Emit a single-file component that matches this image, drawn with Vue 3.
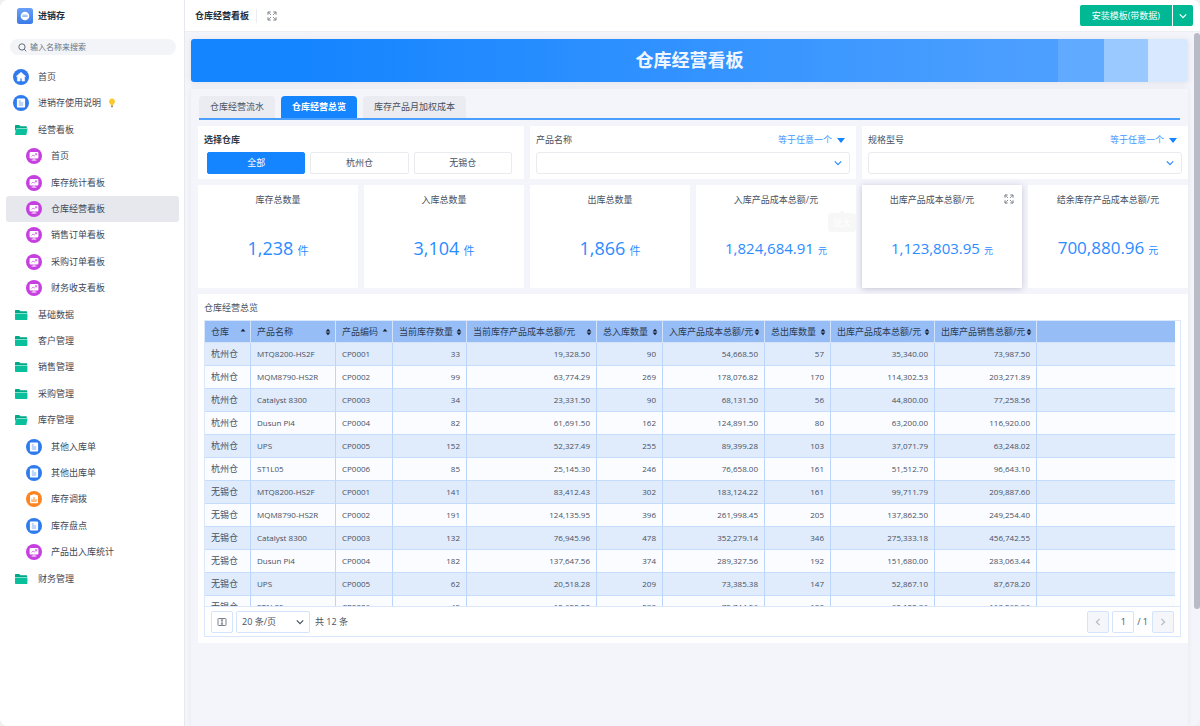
<script setup>
import { ref } from 'vue'

const nav = [
  { label: '首页', icon: 'home' },
  { label: '进销存使用说明', icon: 'doc', tip: true },
  {
    label: '经营看板',
    icon: 'open',
    children: [
      { label: '首页', icon: 'board' },
      { label: '库存统计看板', icon: 'board' },
      { label: '仓库经营看板', icon: 'board', active: true },
      { label: '销售订单看板', icon: 'board' },
      { label: '采购订单看板', icon: 'board' },
      { label: '财务收支看板', icon: 'board' },
    ],
  },
  { label: '基础数据', icon: 'folder' },
  { label: '客户管理', icon: 'folder' },
  { label: '销售管理', icon: 'folder' },
  { label: '采购管理', icon: 'folder' },
  {
    label: '库存管理',
    icon: 'open',
    children: [
      { label: '其他入库单', icon: 'doc' },
      { label: '其他出库单', icon: 'doc' },
      { label: '库存调拨', icon: 'flow' },
      { label: '库存盘点', icon: 'doc' },
      { label: '产品出入库统计', icon: 'board' },
    ],
  },
  { label: '财务管理', icon: 'folder' },
]

const rows = nav.flatMap((item) => [
  { ...item, level: 0 },
  ...(item.children || []).map((child) => ({ ...child, level: 1 })),
])

const tabs = ['仓库经营流水', '仓库经营总览', '库存产品月加权成本']
const tab = ref(1)
const stores = ['全部', '杭州仓', '无锡仓']
const store = ref(0)
const filters = ['产品名称', '规格型号']

const stats = [
  { title: '库存总数量', value: '1,238', unit: '件', size: 'lg' },
  { title: '入库总数量', value: '3,104', unit: '件', size: 'lg' },
  { title: '出库总数量', value: '1,866', unit: '件', size: 'lg' },
  { title: '入库产品成本总额/元', value: '1,824,684.91', unit: '元', size: 'sm', tooltip: true },
  { title: '出库产品成本总额/元', value: '1,123,803.95', unit: '元', size: 'sm', raised: true },
  { title: '结余库存产品成本总额/元', value: '700,880.96', unit: '元', size: 'md' },
]

const columns = [
  { title: '仓库', w: 46, sort: 'asc' },
  { title: '产品名称', w: 85, sort: 'both' },
  { title: '产品编码', w: 57, sort: 'asc' },
  { title: '当前库存数量', w: 74, sort: 'both' },
  { title: '当前库存产品成本总额/元', w: 130, sort: 'both' },
  { title: '总入库数量', w: 66, sort: 'both' },
  { title: '入库产品成本总额/元', w: 102, sort: 'both' },
  { title: '总出库数量', w: 66, sort: 'both' },
  { title: '出库产品成本总额/元', w: 104, sort: 'both' },
  { title: '出库产品销售总额/元', w: 102, sort: 'both' },
]

const records = [
  ['杭州仓', 'MTQ8200-HS2F', 'CP0001', '33', '19,328.50', '90', '54,668.50', '57', '35,340.00', '73,987.50'],
  ['杭州仓', 'MQM8790-HS2R', 'CP0002', '99', '63,774.29', '269', '178,076.82', '170', '114,302.53', '203,271.89'],
  ['杭州仓', 'Catalyst 8300', 'CP0003', '34', '23,331.50', '90', '68,131.50', '56', '44,800.00', '77,258.56'],
  ['杭州仓', 'Dusun Pi4', 'CP0004', '82', '61,691.50', '162', '124,891.50', '80', '63,200.00', '116,920.00'],
  ['杭州仓', 'UPS', 'CP0005', '152', '52,327.49', '255', '89,399.28', '103', '37,071.79', '63,248.02'],
  ['杭州仓', 'ST1L05', 'CP0006', '85', '25,145.30', '246', '76,658.00', '161', '51,512.70', '96,643.10'],
  ['无锡仓', 'MTQ8200-HS2F', 'CP0001', '141', '83,412.43', '302', '183,124.22', '161', '99,711.79', '209,887.60'],
  ['无锡仓', 'MQM8790-HS2R', 'CP0002', '191', '124,135.95', '396', '261,998.45', '205', '137,862.50', '249,254.40'],
  ['无锡仓', 'Catalyst 8300', 'CP0003', '132', '76,945.96', '478', '352,279.14', '346', '275,333.18', '456,742.55'],
  ['无锡仓', 'Dusun Pi4', 'CP0004', '182', '137,647.56', '374', '289,327.56', '192', '151,680.00', '283,063.44'],
  ['无锡仓', 'UPS', 'CP0005', '62', '20,518.28', '209', '73,385.38', '147', '52,867.10', '87,678.20'],
  ['无锡仓', 'ST1L05', 'CP0006', '45', '12,622.20', '233', '72,744.56', '188', '60,122.36', '113,265.96'],
]
</script>

<template>
  <div class="app">
    <aside class="sidebar">
      <div class="brand">
        <svg class="logo" viewBox="0 0 16 16" aria-hidden="true">
          <defs>
            <linearGradient id="logo-fill" x1="0" y1="0" x2="0" y2="1">
              <stop offset="0" stop-color="#6aa0f8" />
              <stop offset="1" stop-color="#3b7be8" />
            </linearGradient>
          </defs>
          <rect width="16" height="16" rx="2.5" fill="url(#logo-fill)" />
          <circle cx="8" cy="8" r="4.3" fill="#fff" />
          <path d="M5.4 7.2h5.2M5.4 8.4h5.2" stroke="#8db4f5" stroke-width="1" />
        </svg>
        <strong>进销存</strong>
      </div>
      <label class="search">
        <svg viewBox="0 0 10 10" aria-hidden="true">
          <circle cx="4.4" cy="4.4" r="3.5" /><path d="M7 7l2.2 2.2" />
        </svg>
        <input type="search" aria-label="搜索" placeholder="输入名称来搜索" />
      </label>
      <nav class="menu">
        <a
          v-for="(item, i) in rows"
          :key="i"
          href="#"
          class="item"
          :class="{ sub: item.level === 1, active: item.active }"
        >
          <svg class="icon" viewBox="0 0 16 16" aria-hidden="true">
            <template v-if="item.icon === 'home'">
              <circle cx="8" cy="8" r="8" fill="#2f7bee" />
              <path d="M8 3.2L3.2 7.4h1.2v4.7h2.7V9.3h1.8v2.8h2.7V7.4h1.2z" fill="#fff" stroke="#fff" stroke-width=".5" stroke-linejoin="round" />
            </template>
            <template v-else-if="item.icon === 'doc'">
              <circle cx="8" cy="8" r="8" fill="#2f7bee" />
              <rect x="3.9" y="3.6" width="8.2" height="8.8" rx="1" fill="#fff" />
              <path d="M5.8 6h2M5.8 8h4.4M5.8 10h4.4" stroke="#5b97f2" stroke-width=".8" />
            </template>
            <template v-else-if="item.icon === 'board'">
              <circle cx="8" cy="8" r="8" fill="#c63fe0" />
              <rect x="3.6" y="4" width="8.8" height="6.6" rx="1" fill="#fff" />
              <path d="M8 10.4v1.6M5.6 12.1h4.8" stroke="#fff" stroke-width=".9" />
              <path d="M5.5 8.4l1.6-1.3 1.2.9L10.4 6M9 5.8h1.5v1.4" fill="none" stroke="#c63fe0" stroke-width=".7" />
            </template>
            <template v-else-if="item.icon === 'flow'">
              <circle cx="8" cy="8" r="8" fill="#fd8420" />
              <rect x="4" y="3.9" width="8" height="8.4" rx="1" fill="#fff" />
              <path d="M6.4 3.3h3.2v1.4H6.4z" fill="#fff" />
              <path d="M6 10.4V8.2M8 10.4V6.2M10 10.4V8.2" stroke="#fd8420" stroke-width="1" />
              <path d="M5.5 10.4h5" stroke="#fd8420" stroke-width=".6" />
            </template>
            <template v-else-if="item.icon === 'open'">
              <path d="M2 3.7q0-.7.7-.7h3.5l1.3 1.3h5.6q.7 0 .7.7v1H3.6L2 10z" fill="#00a887" />
              <path d="M3.4 6.4h11.2l-1.2 6q-.1.5-.6.5H2.6q-.6 0-.6-.6z" fill="#0abf9c" />
            </template>
            <template v-else>
              <path d="M2 6V3.7q0-.7.7-.7h3.5l1.3 1.3h6q.7 0 .7.7v1z" fill="#00a887" />
              <path d="M2 6.4h12.4v5.8q0 .7-.7.7h-11q-.7 0-.7-.7z" fill="#0abf9c" />
            </template>
          </svg>
          <span>{{ item.label }}</span>
          <svg v-if="item.tip" class="bulb" viewBox="0 0 8 10" aria-hidden="true">
            <path d="M4 .6a3 3 0 0 1 1.5 5.6L5.2 7.4H2.8L2.5 6.2A3 3 0 0 1 4 .6z" fill="#fdc82b" />
            <path d="M3 7.6h2v1.6H3z" fill="#9a8f7a" />
          </svg>
        </a>
      </nav>
    </aside>

    <div class="page">
      <header class="topbar">
        <h1>仓库经营看板</h1>
        <button class="plain divider" aria-label="全屏">
          <svg class="expand" viewBox="0 0 10 10" aria-hidden="true">
            <path d="M1 3.6V1h2.6M6.4 1H9v2.6M9 6.4V9H6.4M3.6 9H1V6.4M2.4 2.4l1.4 1.4M7.6 2.4L6.2 3.8M7.6 7.6L6.2 6.2M2.4 7.6l1.4-1.4" />
          </svg>
        </button>
        <div class="install">
          <button>安装模板(带数据)</button>
          <button aria-label="更多">
            <svg class="chev" viewBox="0 0 8 8" aria-hidden="true"><path d="M.8 2.4L4 5.6l3.2-3.2" /></svg>
          </button>
        </div>
      </header>

      <div class="scroller">
        <main class="content">
          <div class="banner"><h2>仓库经营看板</h2></div>

          <section class="dashboard">
            <div class="tabs" role="tablist">
              <button
                v-for="(name, i) in tabs"
                :key="name"
                role="tab"
                :aria-selected="tab === i"
                :class="{ on: tab === i }"
                @click="tab = i"
              >{{ name }}</button>
            </div>

            <div class="grid">
              <div class="card filter">
                <div class="filter-head"><strong>选择仓库</strong></div>
                <div class="choices">
                  <button v-for="(name, i) in stores" :key="name" :class="{ on: store === i }" @click="store = i">{{ name }}</button>
                </div>
              </div>
              <div v-for="(name, i) in filters" :key="name" class="card filter">
                <div class="filter-head">
                  <label :for="'filter-' + i">{{ name }}</label>
                  <button class="plain cond">等于任意一个<i class="tri"></i></button>
                </div>
                <div class="picker">
                  <select :id="'filter-' + i"><option></option></select>
                  <svg class="chev" viewBox="0 0 8 8" aria-hidden="true"><path d="M.8 2.4L4 5.6l3.2-3.2" /></svg>
                </div>
              </div>

              <div v-for="s in stats" :key="s.title" class="card stat" :class="{ raised: s.raised }">
                <h3>{{ s.title }}</h3>
                <p :class="s.size">{{ s.value }}<small>{{ s.unit }}</small></p>
                <button v-if="s.raised" class="plain zoom" aria-label="放大">
                  <svg class="expand" viewBox="0 0 10 10" aria-hidden="true">
                    <path d="M1 3.6V1h2.6M6.4 1H9v2.6M9 6.4V9H6.4M3.6 9H1V6.4M2.4 2.4l1.4 1.4M7.6 2.4L6.2 3.8M7.6 7.6L6.2 6.2M2.4 7.6l1.4-1.4" />
                  </svg>
                </button>
                <span v-if="s.tooltip" class="tooltip">放大</span>
              </div>

              <div class="card report">
                <h3>仓库经营总览</h3>
                <div class="frame">
                  <div class="viewport">
                    <table>
                      <colgroup>
                        <col v-for="c in columns" :key="c.title" :style="{ width: c.w + 'px' }" />
                        <col />
                      </colgroup>
                      <thead>
                        <tr>
                          <th v-for="c in columns" :key="c.title" scope="col">
                            <div class="th">
                              <span>{{ c.title }}</span>
                              <svg class="sort" viewBox="0 0 6 8" aria-hidden="true">
                                <path d="M.6 3.4L3 .8l2.4 2.6z" />
                                <path v-if="c.sort === 'both'" d="M.6 4.6L3 7.2l2.4-2.6z" />
                              </svg>
                            </div>
                          </th>
                          <td></td>
                        </tr>
                      </thead>
                      <tbody>
                        <tr v-for="(r, i) in records" :key="i">
                          <td v-for="(v, j) in r" :key="j" :class="{ cjk: j === 0, num: j > 2 }">{{ v }}</td>
                          <td></td>
                        </tr>
                      </tbody>
                    </table>
                  </div>
                  <footer class="pager">
                    <button class="box" aria-label="列设置">
                      <svg class="cols" viewBox="0 0 10 10" aria-hidden="true">
                        <rect x="1" y="1.5" width="8" height="7" rx=".8" /><path d="M5 2.6v4.8M3.8 3h2.4M3.8 7h2.4" />
                      </svg>
                    </button>
                    <div class="size">
                      <select aria-label="每页条数"><option>20 条/页</option></select>
                      <svg class="chev" viewBox="0 0 8 8" aria-hidden="true"><path d="M.8 2.4L4 5.6l3.2-3.2" /></svg>
                    </div>
                    <span>共 12 条</span>
                    <div class="turn">
                      <button class="box" disabled aria-label="上一页">
                        <svg class="chev" viewBox="0 0 8 8" aria-hidden="true"><path d="M5.6.8L2.4 4l3.2 3.2" /></svg>
                      </button>
                      <input class="box" type="text" value="1" aria-label="页码" />
                      <span class="total">/ 1</span>
                      <button class="box" disabled aria-label="下一页">
                        <svg class="chev" viewBox="0 0 8 8" aria-hidden="true"><path d="M2.4.8L5.6 4 2.4 7.2" /></svg>
                      </button>
                    </div>
                  </footer>
                </div>
              </div>
            </div>
          </section>
        </main>
        <div class="track"><div class="thumb"></div></div>
      </div>
    </div>
  </div>
</template>

<style>
body {
  background: #eef0f1;
}
</style>

<style scoped>
* {
  box-sizing: border-box;
}
.app {
  display: flex;
  min-height: 100vh;
  border-radius: 8px;
  overflow: hidden;
  background: #f4f5fa;
  font: 9px/14px "Open Sans", "Noto Sans CJK SC", sans-serif;
  color: #48515f;
}
h1, h2, h3, p {
  margin: 0;
  font-size: inherit;
  font-weight: 400;
}
button, input, select {
  margin: 0;
  padding: 0;
  font: inherit;
  color: inherit;
  border: 0;
  background: none;
  outline: 0;
  appearance: none;
}
.plain {
  display: flex;
  align-items: center;
}
.chev {
  width: 8px;
  height: 8px;
  fill: none;
  stroke: currentColor;
  stroke-width: 1.2;
}
.expand {
  width: 10px;
  height: 10px;
  fill: none;
  stroke: #5a616c;
  stroke-width: 0.9;
}

.sidebar {
  flex: none;
  width: 185px;
  background: #fff;
  border-right: 1px solid #e6e8ee;
}
.brand {
  display: flex;
  align-items: center;
  gap: 5px;
  height: 32px;
  padding-left: 17px;
  color: #1f2d3d;
}
.logo {
  width: 16px;
  height: 16px;
}
.search {
  display: flex;
  align-items: center;
  gap: 3px;
  height: 16px;
  margin: 7px 8px 0 10px;
  padding: 0 8px;
  border-radius: 8px;
  background: #f3f4f7;
}
.search svg {
  width: 9px;
  height: 9px;
  fill: none;
  stroke: #555e6b;
}
.search input {
  flex: 1;
  min-width: 0;
  font-size: 8px;
}
.search input::placeholder {
  color: #6a7381;
}
.menu {
  margin-top: 9px;
  padding: 0 5px 0 6px;
}
.item {
  display: flex;
  align-items: center;
  height: 26px;
  padding-left: 7px;
  border-radius: 3px;
  color: #3f4856;
  text-decoration: none;
}
.item:nth-child(5n + 3),
.item:nth-child(5n + 5) {
  margin-top: 1px;
}
.item.sub {
  padding-left: 20px;
}
.item.active {
  background: #e6e8ee;
}
.icon {
  width: 16px;
  height: 16px;
  margin-right: 9px;
}
.bulb {
  width: 8px;
  height: 10px;
  margin-left: 7px;
}

.page {
  display: flex;
  flex-direction: column;
  flex: 1;
  min-width: 0;
}
.topbar {
  display: flex;
  align-items: center;
  height: 32px;
  padding: 0 7px 0 10px;
  background: #fff;
  border-bottom: 1px solid #eceef2;
}
.topbar h1 {
  font-weight: 700;
  color: #1f2d3d;
}
.divider {
  height: 14px;
  margin-left: 7px;
  padding-left: 10px;
  border-left: 1px solid #eceef2;
}
.install {
  display: flex;
  gap: 1px;
  margin-left: auto;
  border-radius: 2px;
  overflow: hidden;
}
.install button {
  display: flex;
  align-items: center;
  height: 21px;
  padding: 0 12px;
  background: #00b893;
  color: #fff;
}
.install button + button {
  padding: 0 6px;
}

.scroller {
  display: flex;
  flex: 1;
}
.content {
  display: flex;
  flex-direction: column;
  flex: 1;
  min-width: 0;
  padding: 7px 6px 0 6px;
}
.track {
  width: 6px;
}
.thumb {
  height: 83%;
  margin-top: 1px;
  border-radius: 3px;
  background: #b9bcc6;
}
.banner {
  height: 43px;
  border-radius: 3px;
  background: linear-gradient(
    90deg,
    #1484ff 0%,
    #1484ff 10%,
    #4c9fff 84%,
    #4c9fff 87%,
    #60aaff 87%,
    #60aaff calc(100% - 84px),
    #9ac9ff calc(100% - 84px),
    #9ac9ff calc(100% - 40px),
    #d8e8ff calc(100% - 40px)
  );
  box-shadow: 0 1px 6px rgba(40, 50, 90, 0.1);
}
.banner h2 {
  color: #f0f6ff;
  font-size: 18px;
  line-height: 43px;
  font-weight: 700;
  text-align: center;
}
.dashboard {
  flex: 1;
  margin-top: 7px;
  padding: 7px 0 0 7px;
  box-shadow: 0 0 5px rgba(40, 50, 90, 0.07);
}
.tabs {
  display: flex;
  gap: 6px;
  margin: 0 8px 0 1px;
  border-bottom: 2px solid #4a9fff;
}
.tabs button {
  height: 22px;
  padding: 0 11px;
  border-radius: 4px 4px 0 0;
  background: #ebecf1;
}
.tabs .on {
  background: #1484ff;
  color: #fff;
  font-weight: 700;
}
.grid {
  display: grid;
  grid-template-columns: repeat(6, 1fr);
  gap: 6px;
  margin-top: 6px;
}
.card {
  position: relative;
  background: #fff;
}
.filter {
  grid-column: span 2;
  height: 53px;
  padding: 7px 6px 0 6px;
}
.filter-head {
  display: flex;
  justify-content: space-between;
}
.filter-head strong {
  color: #2f3a48;
}
.cond {
  gap: 5px;
  padding-right: 5px;
  color: #3d97ff;
}
.tri {
  border: 4px solid transparent;
  border-top: 5px solid #1484ff;
  border-bottom: 0;
}
.choices {
  display: grid;
  grid-template-columns: repeat(3, 1fr);
  gap: 5px;
  margin: 5px 6px 0 3px;
}
.choices button {
  height: 22px;
  border: 1px solid #e9ebef;
  border-radius: 2px;
}
.choices .on {
  border-color: #1484ff;
  background: #1484ff;
  color: #fff;
}
.picker {
  position: relative;
  margin-top: 5px;
}
.picker select {
  display: block;
  width: 100%;
  height: 22px;
  border: 1px solid #e9ebef;
  border-radius: 3px;
}
.picker .chev {
  position: absolute;
  top: 7px;
  right: 8px;
  color: #2b8cff;
  pointer-events: none;
}
.stat {
  height: 103px;
  padding-top: 8px;
  text-align: center;
}
.raised {
  box-shadow: 0 1px 6px rgba(50, 50, 110, 0.25);
}
.raised h3 {
  margin-right: 20px;
}
.stat p {
  margin-top: 28px;
  line-height: 26px;
  color: #2b8cff;
}
.stat p small {
  margin-left: 4px;
}
.stat .lg {
  font-size: 18px;
}
.stat .lg small {
  font-size: 11px;
}
.stat .md {
  font-size: 17px;
}
.stat .md small {
  font-size: 10px;
}
.stat .sm {
  font-size: 15px;
}
.stat .sm small {
  font-size: 9px;
}
.zoom {
  position: absolute;
  top: 9px;
  right: 8px;
}
.tooltip {
  position: absolute;
  top: 28px;
  right: 0;
  padding: 2px 5px;
  border-radius: 3px;
  background: #f7f7f8;
  color: #fff;
  line-height: 15px;
}
.tooltip::before {
  content: "";
  position: absolute;
  top: -3px;
  left: 50%;
  margin-left: -3px;
  border: 3px solid transparent;
  border-top: 0;
  border-bottom-color: #f7f7f8;
}
.report {
  grid-column: 1 / -1;
  padding: 7px 7px 6px 6px;
}
.report h3 {
  margin-bottom: 5px;
}
.frame {
  border: 1px solid #dbe8fb;
}
.viewport {
  height: 285px;
  padding-right: 5px;
  overflow: hidden;
}
table {
  width: 100%;
  table-layout: fixed;
  border-collapse: separate;
  border-spacing: 0;
}
thead th,
thead td {
  height: 22px;
  padding: 0 4px 0 6px;
  border-right: 1px solid #d2e3fb;
  border-bottom: 1px solid #d2e3fb;
  background: #97bdf6;
  color: #2d3b50;
  font-weight: 400;
}
.th {
  display: flex;
  align-items: center;
  justify-content: space-between;
  white-space: nowrap;
}
.sort {
  flex: none;
  width: 6px;
  height: 8px;
  fill: #17202c;
}
tbody td {
  height: 23px;
  padding: 0 6px;
  border-right: 1px solid #bcd6fb;
  border-bottom: 1px solid #c6dcfb;
  background: #fbfcff;
  font-size: 8px;
  white-space: nowrap;
}
tbody tr:nth-child(odd) td {
  background: #e0ebfc;
}
tbody td.cjk {
  font-size: 9px;
}
tbody td.num {
  text-align: right;
}
thead td:last-child,
tbody td:last-child {
  border-right: 0;
}
.pager {
  display: flex;
  align-items: center;
  gap: 3px;
  height: 30px;
  padding: 0 6px;
  border-top: 1px solid #dbe8fb;
}
.box {
  display: flex;
  align-items: center;
  justify-content: center;
  width: 22px;
  height: 22px;
  border: 1px solid #d3e4fc;
  border-radius: 2px;
  text-align: center;
}
.box:disabled {
  background: #f4f6f9;
  color: #b4bac4;
}
.cols {
  width: 10px;
  height: 10px;
  fill: none;
  stroke: #59626f;
  stroke-width: 0.8;
}
.size {
  position: relative;
  margin-right: 2px;
}
.size select {
  display: block;
  width: 74px;
  height: 22px;
  padding-left: 5px;
  border: 1px solid #d3e4fc;
  border-radius: 2px;
}
.size .chev {
  position: absolute;
  top: 7px;
  right: 6px;
  pointer-events: none;
}
.turn {
  display: flex;
  align-items: center;
  gap: 3px;
  margin-left: auto;
}
.total {
  margin-right: 1px;
}
</style>
